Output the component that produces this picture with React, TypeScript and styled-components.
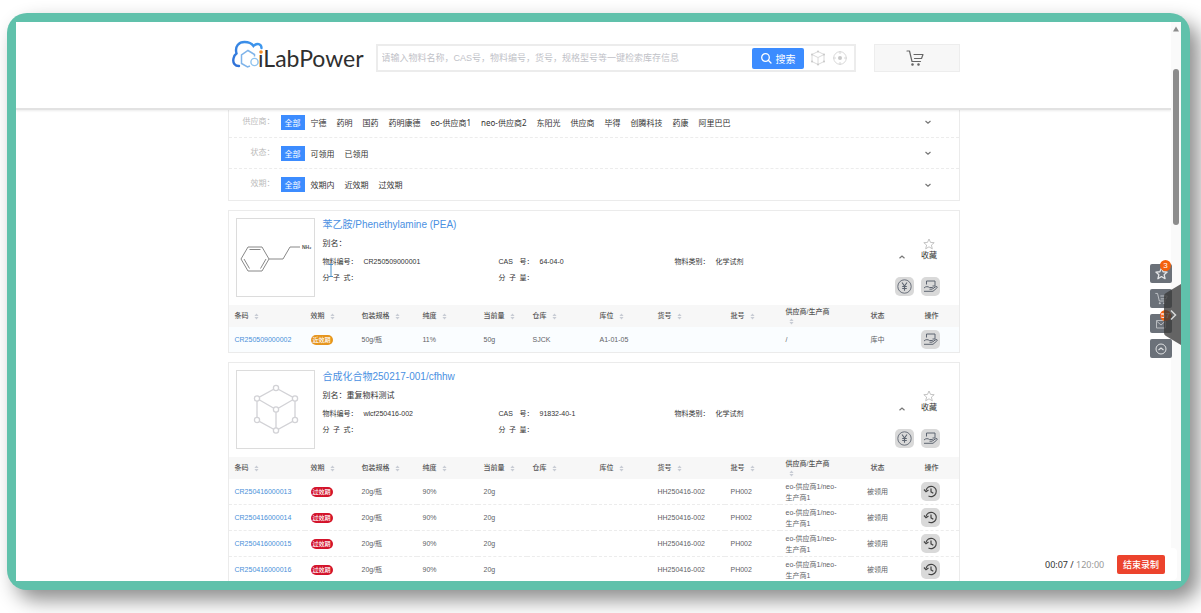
import React from "react";
import styled, { createGlobalStyle } from "styled-components";

const GlobalStyle = createGlobalStyle`
  * { box-sizing: border-box; }
  body {
    margin: 0;
    background: #fff;
    color: #333;
    font-family: "Liberation Sans", "Noto Sans CJK SC", sans-serif;
    font-size: 8px;
  }
  button, input { font: inherit; color: inherit; }
  button { border: 0; padding: 0; margin: 0; background: none; cursor: pointer; }
  a { text-decoration: none; }
  ul, dl, dd { margin: 0; padding: 0; list-style: none; }
`;

const Stage = styled.div`
  height: 100vh;
  padding: 13px 11px 23px 7px;
  overflow: hidden;
`;

const Frame = styled.div`
  height: 100%;
  padding: 9px;
  border-radius: 20px;
  background: #60c1ab;
  box-shadow: 9px 10px 20px rgba(0, 0, 0, 0.45);
`;

const Screen = styled.div`
  position: relative;
  display: flex;
  height: 100%;
  background: #fff;
  overflow: hidden;
`;

const Page = styled.div`
  flex: 1;
  min-width: 0;
  overflow: hidden;
`;

const Container = styled.div`
  width: 100%;
  max-width: 732px;
  margin: 0 auto;
`;

const Header = styled.header`
  position: relative;
  z-index: 1;
  height: 88px;
  padding-top: 16px;
  background: #fff;
  border-bottom: 2px solid #e2e2e2;
  box-shadow: 0 1px 2px rgba(0, 0, 0, 0.08);
`;

const HeaderRow = styled(Container)`
  display: flex;
  align-items: flex-start;
  padding-left: 2px;
`;

const Logo = styled.a`
  flex: none;
  display: block;
  width: 136px;
  height: 36px;
  margin-right: 10px;
`;

const SearchForm = styled.form`
  flex: 1;
  display: flex;
  align-items: center;
  height: 28px;
  margin: 6px 18px 0 0;
  padding-right: 6px;
  border: 2px solid #ececec;
`;

const SearchInput = styled.input`
  flex: 1;
  min-width: 0;
  border: 0;
  outline: 0;
  padding: 0 4px;
  font-size: 9px;
  &::placeholder { color: #bfc2c8; opacity: 1; }
`;

const SearchButton = styled.button`
  display: flex;
  align-items: center;
  justify-content: center;
  gap: 4px;
  width: 52px;
  height: 21px;
  margin-right: 6px;
  border-radius: 2px;
  background: #3c8cff;
  color: #fff;
  font-size: 10px;
`;

const PlainIcon = styled.button`
  display: flex;
  width: 16px;
  height: 16px;
  margin-right: 6px;
  &:last-child { margin-right: 0; }
`;

const CartButton = styled.button`
  display: flex;
  align-items: center;
  justify-content: center;
  width: 86px;
  height: 28px;
  margin-top: 6px;
  padding-right: 4px;
  border: 1px solid #ededed;
  background: #f7f7f7;
`;

const Filters = styled.section`
  margin-top: -3px;
  border: 1px solid #ebebeb;
  border-top: 0;
`;

const FilterRow = styled.div`
  display: flex;
  align-items: center;
  height: 31px;
  padding-right: 27px;
  border-bottom: 1px dashed #ececec;
  font-family: "Noto Sans", "Noto Sans CJK SC", sans-serif;
  &:last-child { border-bottom: 0; }
`;

const FilterLabel = styled.span`
  width: 46px;
  margin-right: 6px;
  padding-bottom: 4px;
  text-align: right;
  color: #bbb;
`;

const FilterOption = styled.button<{ $active?: boolean }>`
  height: 15px;
  margin-right: ${(p) => (p.$active ? 6 : 10)}px;
  padding: ${(p) => (p.$active ? "0 4px" : "0")};
  line-height: 15px;
  background: ${(p) => (p.$active ? "#3c8cff" : "transparent")};
  color: ${(p) => (p.$active ? "#fff" : "#333")};
`;

const FilterToggle = styled.button`
  display: flex;
  margin-left: auto;
`;

const Card = styled.article`
  margin-top: 9px;
  border: 1px solid #ebebeb;
`;

const Summary = styled.div`
  display: flex;
  height: 94px;
  padding: 7px 18px 8px 7px;
`;

const Thumb = styled.div`
  flex: none;
  width: 79px;
  height: 79px;
  margin-right: 8px;
  border: 1px solid #dcdcdc;
`;

const Info = styled.div`
  flex: 1;
  min-width: 0;
`;

const Title = styled.a`
  display: block;
  height: 17px;
  line-height: 14px;
  font-size: 10px;
  color: #4a90e2;
`;

const Alias = styled.div`
  height: 18px;
  line-height: 18px;
`;

const Facts = styled.dl`
  display: grid;
  grid-template-columns: repeat(3, 176px);
  grid-auto-rows: 16px;
  font-size: 7px;
`;

const Fact = styled.div`
  display: flex;
  align-items: center;
`;

const FactLabel = styled.dt`
  display: flex;
  margin-right: 6px;
  white-space: nowrap;
`;

const FactName = styled.span`
  width: 28px;
  text-align-last: justify;
`;

const FactValue = styled.dd`
  white-space: nowrap;
`;

const SideTools = styled.div`
  display: grid;
  grid-template-columns: 20px 20px;
  grid-template-rows: 39px 20px;
  column-gap: 6px;
  align-content: end;
  justify-items: center;
  align-items: start;
`;

const Collapse = styled.button`
  display: flex;
  margin: 16px 6px 0 0;
`;

const Favorite = styled.button`
  display: flex;
  flex-direction: column;
  align-items: center;
  margin-right: 3px;
  line-height: 12px;
  white-space: nowrap;
`;

const IconTile = styled.button`
  display: inline-flex;
  align-items: center;
  justify-content: center;
  width: 19px;
  height: 19px;
  border-radius: 5px;
  background: #d9d9d9;
  vertical-align: middle;
`;

const StockTable = styled.table`
  width: 100%;
  table-layout: fixed;
  border-spacing: 0;
  font-size: 7px;
`;

const Th = styled.th<{ $center?: boolean }>`
  height: 22px;
  padding: ${(p) => (p.$center ? "0" : "0 0 0 6px")};
  background: #f7f7f7;
  font-weight: 500;
  line-height: 10px;
  color: #555;
  text-align: ${(p) => (p.$center ? "center" : "left")};
  white-space: nowrap;
`;

const ThInner = styled.span<{ $stack?: boolean }>`
  display: flex;
  flex-direction: ${(p) => (p.$stack ? "column" : "row")};
  align-items: ${(p) => (p.$stack ? "flex-start" : "center")};
  gap: ${(p) => (p.$stack ? 1 : 5)}px;
  & > svg { margin-left: ${(p) => (p.$stack ? 3 : 0)}px; }
`;

const Td = styled.td<{ $center?: boolean }>`
  height: 26px;
  padding: ${(p) => (p.$center ? "0" : "0 8px 0 6px")};
  border-bottom: 1px dashed #ececec;
  line-height: 11px;
  color: #606266;
  text-align: ${(p) => (p.$center ? "center" : "left")};
  tr:last-child > & { height: 25px; border-bottom: 0; }
  & > ${IconTile} { margin-right: 3px; }
`;

const StockRow = styled.tr<{ $tint?: boolean }>`
  background: ${(p) => (p.$tint ? "#fafdff" : "#fff")};
`;

const NoWrap = styled.span`
  white-space: nowrap;
`;

const Barcode = styled.a`
  color: #4a90d9;
`;

const Tag = styled.span<{ $tone: "warn" | "bad" }>`
  display: block;
  width: 22px;
  height: 10px;
  border-radius: 5px;
  background: ${(p) => (p.$tone === "warn" ? "#e6951e" : "#d3132b")};
  color: #fff;
  font-size: 6px;
  font-weight: 500;
  line-height: 10px;
  text-align: center;
  white-space: nowrap;
`;

const Scrollbar = styled.div`
  flex: none;
  display: flex;
  flex-direction: column;
  align-items: center;
  width: 10px;
  padding-top: 4px;
  background: #fafafa;
`;

const ScrollThumb = styled.div`
  width: 6px;
  height: 156px;
  margin-top: 37px;
  border-radius: 3px;
  background: #8c8c8c;
`;

const Dock = styled.div`
  position: absolute;
  top: 242px;
  right: 9px;
  display: flex;
  flex-direction: column;
  gap: 6px;
`;

const DockButton = styled.button`
  position: relative;
  display: flex;
  align-items: center;
  justify-content: center;
  width: 22px;
  height: 19px;
  border-radius: 2px;
  background: #6b7179;
`;

const Badge = styled.span`
  position: absolute;
  top: -4px;
  right: 1px;
  min-width: 11px;
  height: 11px;
  padding: 0 1px;
  border-radius: 6px;
  background: #f4610c;
  color: #fff;
  font-size: 8px;
  line-height: 11px;
  text-align: center;
`;

const Drawer = styled.button`
  position: absolute;
  top: 262px;
  right: 0;
  display: flex;
`;

const Recorder = styled.div`
  position: absolute;
  right: 4px;
  bottom: 1px;
  display: flex;
  align-items: center;
  justify-content: space-between;
  width: 144px;
  height: 32px;
  padding: 0 12px;
  border-radius: 4px;
  background: #fff;
  font-family: "Noto Sans", "Noto Sans CJK SC", sans-serif;
  font-size: 9px;
  color: #999;
`;

const Elapsed = styled.span`
  color: #333;
`;

const StopButton = styled.button`
  width: 48px;
  height: 19px;
  border-radius: 2px;
  background: #ec432d;
  color: #fff;
  font-weight: 500;
`;

const Cursor = styled.svg`
  position: absolute;
  top: 242px;
  left: 312px;
`;

const LogoArt = () => (
  <svg width="136" height="36" viewBox="0 0 136 36">
    <defs>
      <linearGradient id="cloud" x1="0" y1="1" x2="1" y2="0">
        <stop offset="0" stopColor="#2f6fd6" />
        <stop offset="1" stopColor="#3f9bf0" />
      </linearGradient>
    </defs>
    <path d="M9 28C5 28 2.500 25 3.500 20.500C4 18 5 16.500 6.500 15.500C4.500 8 9 4 14.500 4C18.500 4 21.500 5 23.500 8C27 4.500 31.500 6 31.500 10" fill="none" stroke="url(#cloud)" strokeWidth="2.400" strokeLinecap="round" />
    <path d="M20 28L17.500 29L11.500 25.500V17L18 12.500L24.500 16.500V18.500" fill="none" stroke="#7fb4ea" strokeWidth="1.500" />
    <circle cx="24.500" cy="24" r="3.600" fill="none" stroke="#8fc3ee" strokeWidth="1.400" />
    <text x="28" y="29" fontFamily="Lato, sans-serif" fontSize="23" fill="#2f2f2f">ıLabPower</text>
    <circle cx="31" cy="14" r="1.800" fill="#f08a24" />
  </svg>
);

const SearchIcon = () => (
  <svg width="12" height="12" viewBox="0 0 12 12" fill="none" stroke="#fff" strokeWidth="1.300" strokeLinecap="round">
    <circle cx="5.500" cy="5.500" r="3.800" />
    <path d="M8.300 8.300L11 11" />
  </svg>
);

const CubeArt = () => (
  <svg width="77" height="77" viewBox="0 0 77 77" fill="#fff" stroke="#d2d2d6" strokeWidth="1.300">
    <path fill="none" d="M39 17L58 27.500V49L39 59.500L20 49V27.500ZM20 27.500L39 38.500L58 27.500M39 38.500V59.500" />
    {[[39, 17], [20, 27.5], [58, 27.5], [39, 38.5], [20, 49], [58, 49], [39, 59.5]].map(([x, y]) => (
      <circle key={`${x}-${y}`} cx={x} cy={y} r="2.600" />
    ))}
  </svg>
);

const SmallCube = () => (
  <svg width="16" height="16" viewBox="0 0 16 16" fill="none" stroke="#d6d6d6" strokeWidth="0.900">
    <path d="M8 1.500L14 4.500V11.500L8 14.500L2 11.500V4.500ZM2 4.500L8 7.500L14 4.500M8 7.500V14.500" />
    <g fill="#c8c8c8" stroke="none">
      <circle cx="8" cy="1.500" r="1" /><circle cx="2" cy="4.500" r="1" /><circle cx="14" cy="4.500" r="1" />
      <circle cx="2" cy="11.500" r="1" /><circle cx="14" cy="11.500" r="1" /><circle cx="8" cy="14.500" r="1" />
    </g>
  </svg>
);

const TargetIcon = () => (
  <svg width="16" height="16" viewBox="0 0 16 16" fill="none" stroke="#d4d4d4" strokeWidth="0.900">
    <circle cx="8" cy="8" r="6.300" />
    <path d="M8 1V4M8 12V15M1 8H4M12 8H15" />
    <circle cx="8" cy="8" r="2" fill="#c8c8c8" stroke="none" />
  </svg>
);

const CartIcon = ({ size, color }: { size: number; color: string }) => (
  <svg width={size} height={size} viewBox="0 0 18 18" fill="none" stroke={color} strokeWidth="1.200" strokeLinejoin="round" strokeLinecap="round">
    <path d="M1 2H3.500L6 12.500H14.500M8 5.500H17L15.500 9.500H8.500" />
    <circle cx="6.500" cy="15.500" r="0.700" fill={color} />
    <circle cx="12.500" cy="15.500" r="0.700" fill={color} />
  </svg>
);

const Chevron = ({ up }: { up?: boolean }) => (
  <svg width="8" height="6" viewBox="0 0 8 6" fill="none" stroke="#777" strokeWidth="1.200">
    <path d={up ? "M1.500 4.200L4 2L6.500 4.200" : "M1.500 2L4 4.200L6.500 2"} />
  </svg>
);

const StarIcon = ({ color, size, width }: { color: string; size: number; width: number }) => (
  <svg width={size} height={size} viewBox="0 0 12 12" fill="none" stroke={color} strokeWidth={width} strokeLinejoin="round">
    <path d="M6 1L7.500 4.400L11.200 4.700L8.400 7.100L9.300 10.800L6 8.800L2.700 10.800L3.600 7.100L0.800 4.700L4.500 4.400Z" />
  </svg>
);

const YuanIcon = () => (
  <svg width="15" height="15" viewBox="0 0 15 15" fill="none" stroke="#5d6470">
    <circle cx="7.500" cy="7.500" r="6.700" strokeWidth="0.900" />
    <path d="M5 3.500L7.500 7L10 3.500M7.500 7V11.800M5.200 7.500H9.800M5.200 9.500H9.800" strokeWidth="1.100" />
  </svg>
);

const HandIcon = () => (
  <svg width="15" height="15" viewBox="0 0 15 15" fill="none" stroke="#5d6470" strokeLinejoin="round">
    <path d="M3.500 5.500V2H12V7H9.500" />
    <path d="M1 9C3 7 5 7.500 6.500 8.500H9.500C10.500 9 10 10.200 9 10.200H6.500M10 9.500L13 7.500C14.500 7.200 14.500 8.500 13.800 9L10 12.300H1" />
  </svg>
);

const HistoryIcon = () => (
  <svg width="15" height="15" viewBox="0 0 15 15" fill="none" stroke="#444" strokeWidth="1.200">
    <path d="M3 6.500A5.200 5.200 0 1 1 5.500 12" />
    <path d="M1 5.500L3 7.800L5.500 6" />
    <path d="M8 4.500V7.800L10.300 9.300" />
  </svg>
);

const SortIcon = () => (
  <svg width="5" height="7" viewBox="0 0 6 8" fill="#c8ccd4">
    <path d="M3 0.500L5.500 3.300H0.500ZM3 7.500L5.500 4.700H0.500Z" />
  </svg>
);

const Phenethylamine = () => (
  <svg width="77" height="77" viewBox="0 0 77 77" fill="none" stroke="#888">
    <path d="M4 40L11 28H25L32 40L25 52H11ZM12.500 30.500H23.500M29 40L23.500 49.500M12.500 49.500L7 40M32 40H46L53 28H63" />
    <text x="65" y="30" fontSize="5" fontWeight="700" fill="#555" stroke="none">NH₂</text>
  </svg>
);

type Stock = {
  code: string;
  tag: string;
  tone: "warn" | "bad";
  pack: string;
  purity: string;
  amount: string;
  store: string;
  place: string;
  item: string;
  batch: string;
  vendor: string;
  state: string;
};

type Material = {
  title: string;
  alias: string;
  code: string;
  cas: string;
  art: React.ReactNode;
  rows: Stock[];
};

const materials: Material[] = [
  {
    title: "苯乙胺/Phenethylamine (PEA)",
    alias: "",
    code: "CR250509000001",
    cas: "64-04-0",
    art: <Phenethylamine />,
    rows: [
      { code: "CR250509000002", tag: "近效期", tone: "warn", pack: "50g/瓶", purity: "11%", amount: "50g", store: "SJCK", place: "A1-01-05", item: "", batch: "", vendor: "/", state: "库中" },
    ],
  },
  {
    title: "合成化合物250217-001/cfhhw",
    alias: "重复物料测试",
    code: "wlcf250416-002",
    cas: "91832-40-1",
    art: <CubeArt />,
    rows: ["13", "14", "15", "16"].map((n) => ({
      code: `CR2504160000${n}`, tag: "过效期", tone: "bad" as const, pack: "20g/瓶", purity: "90%", amount: "20g", store: "", place: "",
      item: "HH250416-002", batch: "PH002", vendor: "eo-供应商1/neo-生产商1", state: "被领用",
    })),
  },
];

const columns = [
  { name: "条码", width: 76 },
  { name: "效期", width: 51 },
  { name: "包装规格", width: 61 },
  { name: "纯度", width: 61 },
  { name: "当前量", width: 49 },
  { name: "仓库", width: 67 },
  { name: "库位", width: 58 },
  { name: "货号", width: 73 },
  { name: "批号", width: 55 },
  { name: "供应商/生产商", width: 71, stack: true },
  { name: "状态", width: 54, center: true },
  { name: "操作", width: 54, center: true },
];

const filters = [
  { label: "供应商：", options: ["宁德", "药明", "国药", "药明康德", "eo-供应商1", "neo-供应商2", "东阳光", "供应商", "毕得", "创腾科技", "药康", "阿里巴巴"] },
  { label: "状态：", options: ["可领用", "已领用"] },
  { label: "效期：", options: ["效期内", "近效期", "过效期"] },
];

const FactItem = ({ name, value }: { name: string; value?: string }) => (
  <Fact>
    <FactLabel><FactName>{name}</FactName>：</FactLabel>
    <FactValue>{value}</FactValue>
  </Fact>
);

const MaterialCard = ({ m }: { m: Material }) => (
  <Card>
    <Summary>
      <Thumb>{m.art}</Thumb>
      <Info>
        <Title href="#">{m.title}</Title>
        <Alias>别名：{m.alias}</Alias>
        <Facts>
          <FactItem name="物料编号" value={m.code} />
          <FactItem name="CAS 号" value={m.cas} />
          <FactItem name="物料类别" value="化学试剂" />
          <FactItem name="分 子 式" />
          <FactItem name="分 子 量" />
        </Facts>
      </Info>
      <SideTools>
        <Collapse aria-label="收起"><Chevron up /></Collapse>
        <Favorite><StarIcon color="#b5b5b5" size={12} width={0.8} />收藏</Favorite>
        <IconTile aria-label="询价"><YuanIcon /></IconTile>
        <IconTile aria-label="领用"><HandIcon /></IconTile>
      </SideTools>
    </Summary>
    <StockTable>
      <colgroup>
        {columns.map((c) => <col key={c.name} width={c.width} />)}
      </colgroup>
      <thead>
        <tr>
          {columns.map((c) => (
            <Th key={c.name} $center={c.center}>
              {c.center ? c.name : <ThInner $stack={c.stack}>{c.name}<SortIcon /></ThInner>}
            </Th>
          ))}
        </tr>
      </thead>
      <tbody>
        {m.rows.map((r) => (
          <StockRow key={r.code} $tint={r.tone === "warn"}>
            <Td><Barcode href="#">{r.code}</Barcode></Td>
            <Td><Tag $tone={r.tone}>{r.tag}</Tag></Td>
            <Td>{r.pack}</Td>
            <Td>{r.purity}</Td>
            <Td>{r.amount}</Td>
            <Td>{r.store}</Td>
            <Td><NoWrap>{r.place}</NoWrap></Td>
            <Td><NoWrap>{r.item}</NoWrap></Td>
            <Td>{r.batch}</Td>
            <Td>{r.vendor}</Td>
            <Td $center>{r.state}</Td>
            <Td $center>
              <IconTile aria-label="操作">{r.tone === "warn" ? <HandIcon /> : <HistoryIcon />}</IconTile>
            </Td>
          </StockRow>
        ))}
      </tbody>
    </StockTable>
  </Card>
);

export default function App() {
  return (
    <Stage>
      <GlobalStyle />
      <Frame>
        <Screen>
          <Page>
            <Header>
              <HeaderRow>
                <Logo href="#" aria-label="iLabPower"><LogoArt /></Logo>
                <SearchForm>
                  <SearchInput aria-label="搜索" placeholder="请输入物料名称，CAS号，物料编号，货号，规格型号等一键检索库存信息" />
                  <SearchButton type="button"><SearchIcon />搜索</SearchButton>
                  <PlainIcon type="button" aria-label="结构"><SmallCube /></PlainIcon>
                  <PlainIcon type="button" aria-label="定位"><TargetIcon /></PlainIcon>
                </SearchForm>
                <CartButton aria-label="购物车"><CartIcon size={18} color="#666" /></CartButton>
              </HeaderRow>
            </Header>
            <Container as="main">
              <Filters>
                {filters.map((f) => (
                  <FilterRow key={f.label}>
                    <FilterLabel>{f.label}</FilterLabel>
                    <FilterOption $active>全部</FilterOption>
                    {f.options.map((o) => <FilterOption key={o}>{o}</FilterOption>)}
                    <FilterToggle aria-label="展开"><Chevron /></FilterToggle>
                  </FilterRow>
                ))}
              </Filters>
              {materials.map((m) => <MaterialCard key={m.code} m={m} />)}
            </Container>
          </Page>
          <Scrollbar>
            <svg width="6" height="6" viewBox="0 0 6 6"><path d="M3 0.500L6 5.500H0Z" fill="#8c8c8c" /></svg>
            <ScrollThumb />
          </Scrollbar>
          <Dock>
            <DockButton aria-label="收藏夹"><StarIcon color="#e4e6e8" size={13} width={1.2} /><Badge>3</Badge></DockButton>
            <DockButton aria-label="购物车"><CartIcon size={13} color="#c9ccd0" /></DockButton>
            <DockButton aria-label="消息">
              <svg width="12" height="12" viewBox="0 0 12 12" fill="none" stroke="#b9bcc0"><path d="M1.500 2.500H10.500V10H1.500ZM1.500 3L6 7L10.500 3" /></svg>
              <Badge>57</Badge>
            </DockButton>
            <DockButton aria-label="返回顶部">
              <svg width="12" height="12" viewBox="0 0 12 12" fill="none" stroke="#dfe1e3"><circle cx="6" cy="6" r="5" /><path d="M3.500 7L6 5L8.500 7" strokeWidth="1.200" /></svg>
            </DockButton>
          </Dock>
          <Drawer aria-label="展开侧栏">
            <svg width="17" height="61" viewBox="0 0 17 61" fill="none">
              <path d="M17 0V61L2 52Q0 51 0 49V12Q0 10 2 9Z" fill="#3a3a3a" fillOpacity="0.780" />
              <path d="M7 26.500L11.500 31L7 35.500" stroke="#d8d8d8" strokeWidth="1.500" />
            </svg>
          </Drawer>
          <Recorder>
            <span><Elapsed>00:07 /</Elapsed> 120:00</span>
            <StopButton>结束录制</StopButton>
          </Recorder>
          <Cursor width="6" height="13" viewBox="0 0 6 13" fill="none" stroke="#4a90c8"><path d="M1 0.500H5M3 0.500V12.500M1 12.500H5" /></Cursor>
        </Screen>
      </Frame>
    </Stage>
  );
}
